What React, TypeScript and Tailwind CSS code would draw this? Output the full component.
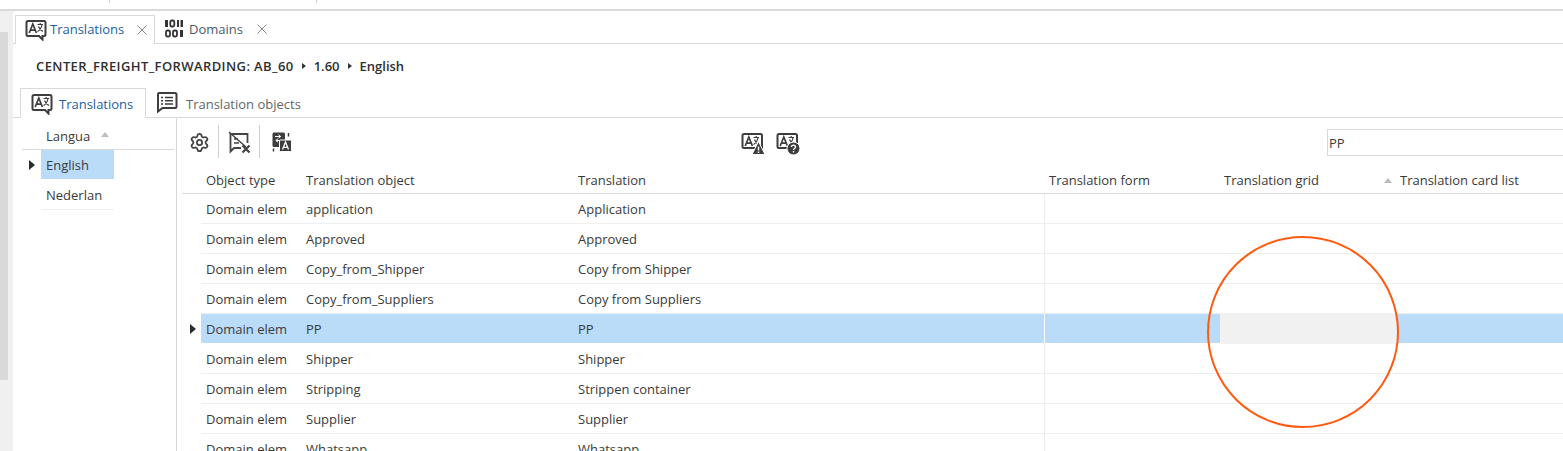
import React from "react";
import { Settings } from "lucide-react";

const font = { fontFamily: '"Open Sans", "Noto Sans", sans-serif' };

function Bubble({ children, size = 22 }: { children?: React.ReactNode; size?: number }) {
  return (
    <svg width={size} height={size} viewBox="0 0 22 22" fill="none" className="shrink-0">
      <path d="M3 2h16a1.500 1.500 0 0 1 1.500 1.500v12a1.500 1.500 0 0 1-1.500 1.500h-1.500v3.500L14 17H3a1.500 1.500 0 0 1-1.500-1.500v-12A1.500 1.500 0 0 1 3 2Z" stroke="#3d3d3d" strokeWidth="2" />
      {children}
    </svg>
  );
}

const AGlyph = () => (
  <g stroke="#3d3d3d" fill="none">
    <path d="M4.200 14 7.800 5 11.400 14M5.500 11.200h4.600" strokeWidth="1.700" />
    <path d="M12.500 5.500h5.500M15.200 4v1.500M17 5.500c-.6 3.500-2.500 6-4.500 7M13.500 7.500c.8 2.500 2.300 4 4.500 5" strokeWidth="1.200" />
  </g>
);

const TranslateIcon = ({ size = 22 }: { size?: number }) => (
  <Bubble size={size}>
    <AGlyph />
  </Bubble>
);

function BinaryIcon() {
  return (
    <svg width="18" height="19" viewBox="0 0 18 19" className="shrink-0">
      <g fill="#333">
        <rect x="0" y="1" width="3" height="7" />
        <rect x="12" y="1" width="2" height="7" />
        <rect x="15.500" y="1" width="2.500" height="7" />
        <rect x="15" y="11" width="3" height="7" />
      </g>
      <g fill="none" stroke="#333" strokeWidth="1.800">
        <rect x="5.300" y="1.500" width="4" height="6" rx="1.500" />
        <rect x="1" y="11.500" width="4" height="6" rx="1.500" />
        <rect x="8" y="11.500" width="4" height="6" rx="1.500" />
      </g>
    </svg>
  );
}

function ListBubbleIcon() {
  return (
    <svg width="22" height="22" viewBox="0 0 22 22" fill="none" className="shrink-0">
      <path d="M3 2h16a1.500 1.500 0 0 1 1.500 1.500v12a1.500 1.500 0 0 1-1.500 1.500H6.500L2 20.500V3.500A1.500 1.500 0 0 1 3 2Z" stroke="#3d3d3d" strokeWidth="2" />
      <path d="M5 6.500h2M9 6.500h8M5 9.800h2M9 9.800h8M5 13h2M9 13h8" stroke="#3d3d3d" strokeWidth="1.500" />
    </svg>
  );
}

function MessageXIcon() {
  return (
    <svg width="24" height="24" viewBox="0 0 24 24" fill="none" className="shrink-0">
      <path d="M13 17H6l-3.500 3.500V3h17v9" stroke="#444" strokeWidth="1.800" />
      <path d="M1 1l17 15M6 8h4M6 12h5" stroke="#444" strokeWidth="1.500" />
      <path d="M14.500 14.500l7 7M21.500 14.500l-7 7" stroke="#444" strokeWidth="2.200" />
    </svg>
  );
}

function DocTranslateIcon() {
  return (
    <svg width="20" height="20" viewBox="0 0 20 20" className="shrink-0">
      <rect x="0.500" y="0.500" width="12.500" height="14.500" rx="1.500" fill="#3d3d3d" />
      <path d="M3 4.500h5.500M6.500 2.800 8.700 4.500 6.500 6.200M9.500 8.500H4M6 6.800 3.800 8.500 6 10.200" stroke="#fff" strokeWidth="1" fill="none" />
      <rect x="7.500" y="8" width="12" height="11.500" rx="1" fill="#3d3d3d" stroke="#fff" />
      <path d="M10.500 17.500l3-7.500 3 7.500M11.500 15.300h4" stroke="#fff" strokeWidth="1.300" fill="none" />
      <path d="M16.500 1v3.500M1.500 16.500v3" stroke="#3d3d3d" strokeWidth="1.500" />
    </svg>
  );
}

function WarnIcon() {
  return (
    <svg width="24" height="24" viewBox="0 0 24 24" fill="none" className="shrink-0">
      <path d="M3 2h16.500A1.500 1.500 0 0 1 21 3.500V16H3a1.500 1.500 0 0 1-1.500-1.500v-11A1.500 1.500 0 0 1 3 2Z" stroke="#3d3d3d" strokeWidth="2" />
      <AGlyph />
      <path d="M17.500 9.500l6.500 13H11Z" fill="#3d3d3d" stroke="#fff" strokeWidth="1" />
      <path d="M17.500 14.500v4M17.500 19.500v1.500" stroke="#fff" strokeWidth="1.500" />
    </svg>
  );
}

function QuestionIcon() {
  return (
    <svg width="24" height="24" viewBox="0 0 24 24" fill="none" className="shrink-0">
      <path d="M3 2h16.500A1.500 1.500 0 0 1 21 3.500V16H3a1.500 1.500 0 0 1-1.500-1.500v-11A1.500 1.500 0 0 1 3 2Z" stroke="#3d3d3d" strokeWidth="2" />
      <AGlyph />
      <circle cx="17.500" cy="16.500" r="6.500" fill="#3d3d3d" stroke="#fff" strokeWidth="1" />
      <path d="M15.500 15c0-2.500 4-2.500 4 0 0 1.500-2 1.500-2 3M17.500 19v1.500" stroke="#fff" strokeWidth="1.400" />
    </svg>
  );
}

const CloseX = () => (
  <svg width="10" height="10" viewBox="0 0 10 10" className="shrink-0">
    <path d="M.5.5l9 9M9.500.5l-9 9" stroke="#888" strokeWidth="1" />
  </svg>
);

const Caret = () => (
  <svg width="6" height="10" viewBox="0 0 6 10" className="shrink-0">
    <path d="M0 0l6 5-6 5Z" fill="#2b2b2b" />
  </svg>
);

const BreadArrow = () => (
  <svg width="4" height="6" viewBox="0 0 4 6" className="shrink-0">
    <path d="M0 0l4 3-4 3Z" fill="#333" />
  </svg>
);

const SortUp = () => (
  <svg width="8" height="5" viewBox="0 0 8 5" className="shrink-0">
    <path d="M4 0l4 5H0Z" fill="#bdbdbd" />
  </svg>
);

const rows = [
  ["application", "Application"],
  ["Approved", "Approved"],
  ["Copy_from_Shipper", "Copy from Shipper"],
  ["Copy_from_Suppliers", "Copy from Suppliers"],
  ["PP", "PP"],
  ["Shipper", "Shipper"],
  ["Stripping", "Strippen container"],
  ["Supplier", "Supplier"],
  ["Whatsapp", "Whatsapp"],
];

export default function App() {
  return (
    <div style={font} className="relative h-[451px] w-[1563px] overflow-hidden bg-white text-[13px] leading-[18px] text-[#3a3a3a]">
      <div className="flex h-[3px] pl-[109px]">
        <div className="w-[208px] border-x border-[#d0d0d0]" />
      </div>
      <div className="h-[6px]" />
      <div className="h-[2px] bg-[#d9d9d9]" />
      <div className="flex h-[440px]">
        <div className="flex w-[13px] shrink-0 flex-col bg-[#f0f0f0]">
          <div className="h-[21px]" />
          <div className="h-[348px] w-[8px] bg-[#d9d9d9]" />
        </div>
        <div className="min-w-0 flex-1">
          <div className="flex h-[33px] items-end border-b border-[#d9d9d9] pl-[2px]">
            <div className="mb-[-1px] flex h-[29px] w-[140px] items-center border-x border-t border-[#d9d9d9] bg-white pl-[9px]">
              <TranslateIcon />
              <span className="mb-[2px] ml-[3px] text-[#1c5ea6]">Translations</span>
              <span className="ml-auto mr-[7px]"><CloseX /></span>
            </div>
            <div className="flex h-[29px] items-center pl-[10px]">
              <BinaryIcon />
              <span className="ml-[6px] text-[#4a5a6a]">Domains</span>
              <span className="ml-[14px]"><CloseX /></span>
            </div>
          </div>
          <div className="flex h-[44px] items-center gap-[8px] pb-[1px] pl-[23px] font-semibold text-[#2f2f2f]">
            <span className="tracking-[0.4px]">CENTER_FREIGHT_FORWARDING: AB_60</span>
            <BreadArrow />
            <span>1.60</span>
            <BreadArrow />
            <span>English</span>
          </div>
          <div className="flex h-[30px] items-end border-b border-[#d9d9d9] pl-[7px]">
            <div className="mb-[-1px] flex h-[30px] w-[126px] items-center border-x border-t border-[#d9d9d9] bg-white pl-[10px]">
              <TranslateIcon />
              <span className="ml-[6px] text-[#1c5ea6]">Translations</span>
            </div>
            <div className="flex h-[30px] items-center pl-[10px]">
              <ListBubbleIcon />
              <span className="ml-[8px] mt-[3px] text-[#666]">Translation objects</span>
            </div>
          </div>
          <div className="flex">
            <div className="h-[340px] w-[164px] shrink-0 border-r border-[#d9d9d9] pt-[5px]">
              <div className="ml-[9px] flex h-[27px] w-[152px] items-center border-b border-[#d9d9d9] pl-[24px]">
                <span>Langua</span>
                <span className="ml-[11px] mb-[3px]"><SortUp /></span>
              </div>
              <div className="flex h-[30px] items-center">
                <span className="ml-[16px] w-[12px]"><Caret /></span>
                <div className="flex h-[29px] w-[73px] items-center self-start bg-[#bbdcf9] pl-[5px]">English</div>
              </div>
              <div className="ml-[28px] flex h-[30px] w-[73px] items-center border-b border-[#eeeeee] pl-[5px]">Nederlan</div>
            </div>
            <div className="min-w-0 flex-1">
              <div className="flex h-[46px] items-start pl-[12px] pt-[7px]">
                <span className="mt-[7px]"><Settings size={21} color="#444" strokeWidth={2} className="shrink-0" /></span>
                <div className="ml-[8px] h-[33px] w-px bg-[#cfcfcf]" />
                <span className="ml-[9px] mt-[6px]"><MessageXIcon /></span>
                <div className="ml-[7px] h-[33px] w-px bg-[#cfcfcf]" />
                <span className="ml-[12px] mt-[7px]"><DocTranslateIcon /></span>
                <span className="ml-[449px] mt-[7px]"><WarnIcon /></span>
                <span className="ml-[11px] mt-[7px]"><QuestionIcon /></span>
                <div className="ml-[527px] mr-[-4px] mt-[4px] flex h-[27px] flex-1 items-center border border-[#d9d9d9] pl-[1px]">PP</div>
              </div>
              <div className="ml-[5px] flex h-[30px] items-center border-b border-[#d9d9d9] pt-[3px]">
                <div className="w-[19px]" />
                <div className="w-[100px] pl-[5px]">Object type</div>
                <div className="w-[272px] pl-[5px]">Translation object</div>
                <div className="w-[471px] pl-[5px]">Translation</div>
                <div className="w-[175px] pl-[5px]">Translation form</div>
                <div className="w-[165px] pl-[5px]">Translation grid</div>
                <div className="flex items-center">
                  <SortUp />
                  <span className="ml-[8px]">Translation card list</span>
                </div>
              </div>
              {rows.map(([obj, tr]) => {
                const selected = obj === "PP";
                return (
                  <div key={obj} className="ml-[5px] flex h-[30px] items-stretch">
                    <div className="flex w-[19px] items-center pl-[8px]">{selected && <Caret />}</div>
                    <div className={`flex flex-1 border-b ${selected ? "border-white bg-[#bbdcf9]" : "border-[#efefef]"}`}>
                      <div className="flex w-[100px] items-center pl-[5px]">Domain elem</div>
                      <div className="flex w-[272px] items-center pl-[5px]">{obj}</div>
                      <div className="flex w-[471px] items-center pl-[5px]">{tr}</div>
                      <div className={`w-[176px] border-l ${selected ? "border-white" : "border-[#efefef]"}`} />
                      {selected && <div className="my-[-1px] h-[31px] w-[177px] bg-[#f1f1f1]" />}
                    </div>
                  </div>
                );
              })}
            </div>
          </div>
        </div>
      </div>
      <div className="absolute left-[1207px] top-[236px] h-[192px] w-[192px] rounded-full border-[2.5px] border-[#ff5a0f]" />
    </div>
  );
}
